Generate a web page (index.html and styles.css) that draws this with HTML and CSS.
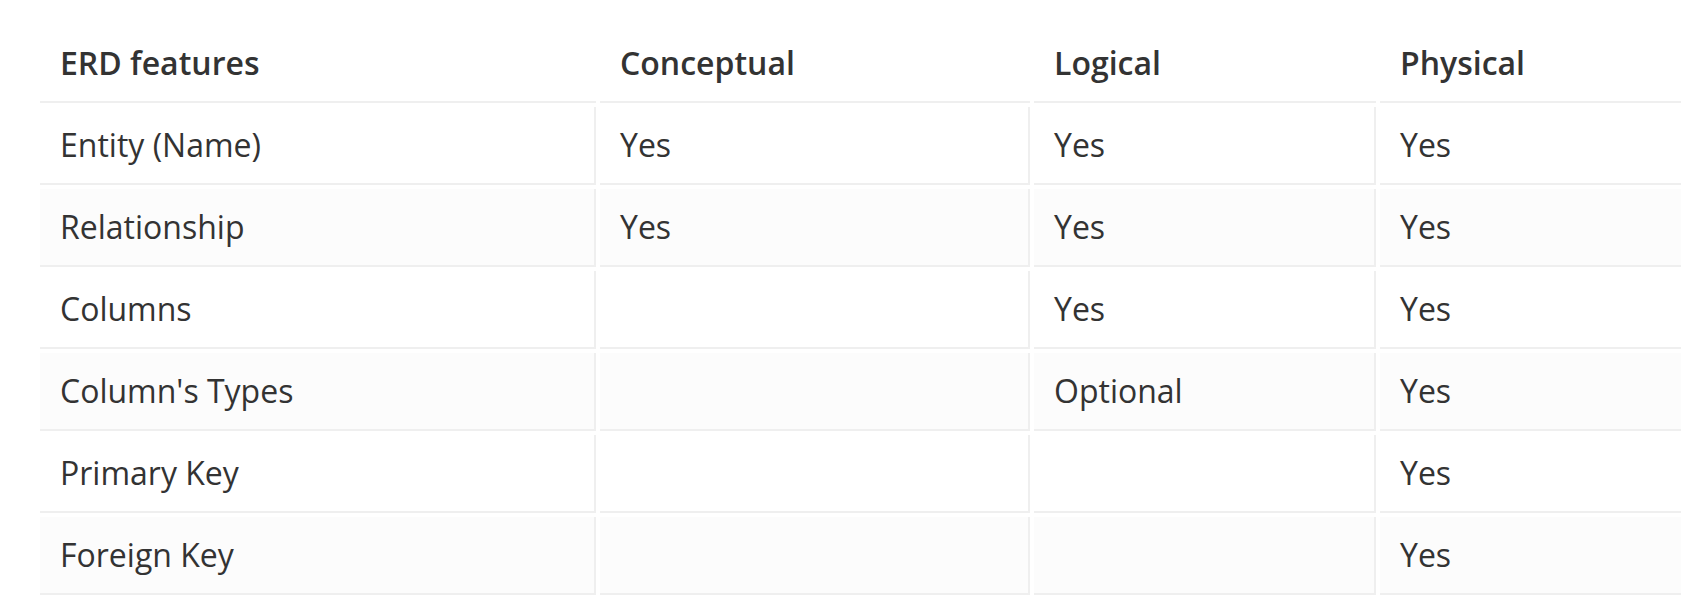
FILE: index.html
```html
<!DOCTYPE html>
<html>
<head>
<meta charset="utf-8">
<link rel="stylesheet" href="styles.css">
</head>
<body>
<div class="wrap">
<table class="erd">
  <colgroup>
    <col class="c1"><col class="c2"><col class="c3"><col class="c4">
  </colgroup>
  <thead>
    <tr><th>ERD features</th><th>Conceptual</th><th>Logical</th><th>Physical</th></tr>
  </thead>
  <tbody>
    <tr><td>Entity (Name)</td><td>Yes</td><td>Yes</td><td>Yes</td></tr>
    <tr><td>Relationship</td><td>Yes</td><td>Yes</td><td>Yes</td></tr>
    <tr><td>Columns</td><td></td><td>Yes</td><td>Yes</td></tr>
    <tr><td>Column's Types</td><td></td><td>Optional</td><td>Yes</td></tr>
    <tr><td>Primary Key</td><td></td><td></td><td>Yes</td></tr>
    <tr><td>Foreign Key</td><td></td><td></td><td>Yes</td></tr>
  </tbody>
</table>
</div>
</body>
</html>
```

FILE: styles.css
```css
html, body {
  margin: 0;
  padding: 0;
  background: #ffffff;
  overflow: hidden;
}
.wrap {
  padding: 21px 0 0 36px;
  width: 1900px;
}
.erd {
  border-collapse: separate;
  border-spacing: 4px;
  table-layout: fixed;
  width: 1650px;
  font-family: "Open Sans", "Noto Sans", sans-serif;
  font-size: 32px;
  line-height: 40px;
  color: #333333;
}
.c1 { width: 556px; }
.c2 { width: 430px; }
.c3 { width: 342px; }
.c4 { width: 310px; }
.erd th {
  text-align: left;
  font-weight: 600;
  padding: 18px 20px 18px 20px;
  border-bottom: 2px solid #efefef;
}
.erd td {
  padding: 18px 20px;
  border-right: 2px solid #efefef;
  border-bottom: 2px solid #efefef;
  white-space: nowrap;
}
.erd tbody tr:nth-child(even) td {
  background: #fcfcfc;
}
```
